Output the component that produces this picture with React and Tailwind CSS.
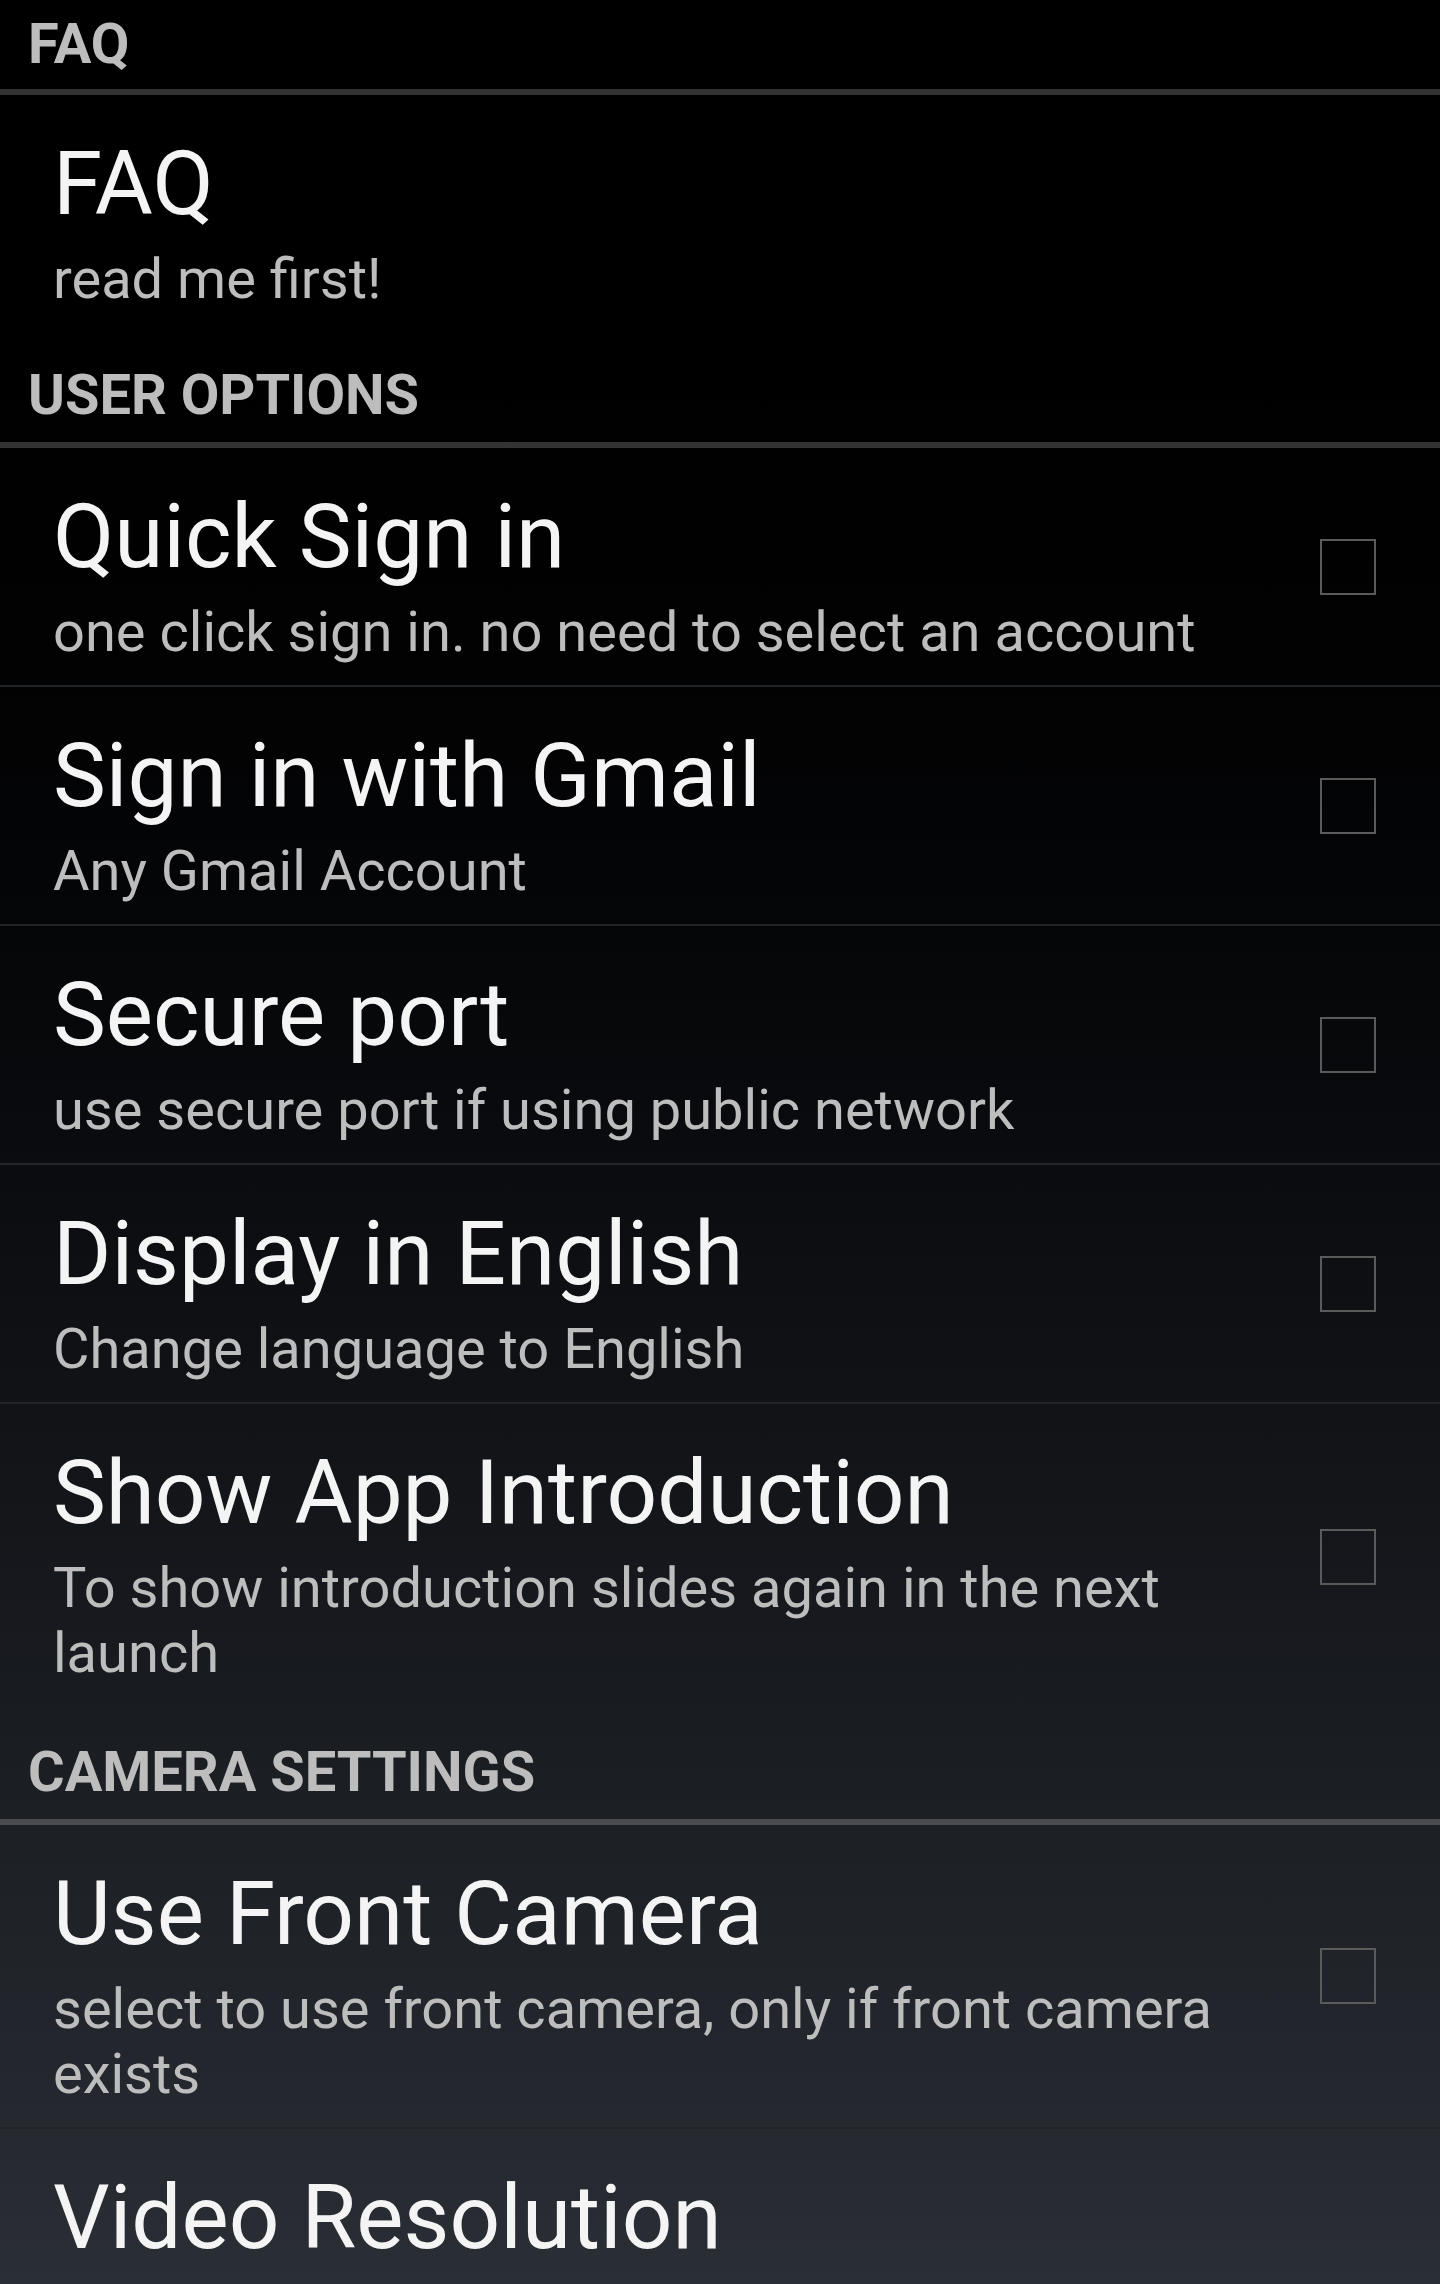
import React from 'react';

const groups = [
  {
    header: 'FAQ',
    first: true,
    items: [{ title: 'FAQ', summary: 'read me first!', noCheck: true }],
  },
  {
    header: 'USER OPTIONS',
    items: [
      { title: 'Quick Sign in', summary: 'one click sign in. no need to select an account' },
      { title: 'Sign in with Gmail', summary: 'Any Gmail Account' },
      { title: 'Secure port', summary: 'use secure port if using public network' },
      { title: 'Display in English', summary: 'Change language to English' },
      { title: 'Show App Introduction', summary: 'To show introduction slides again in the next launch' },
    ],
  },
  {
    header: 'CAMERA SETTINGS',
    items: [
      { title: 'Use Front Camera', summary: 'select to use front camera, only if front camera exists' },
      { title: 'Video Resolution', summary: '', noCheck: true },
    ],
  },
];

function Header({ text, first }) {
  return (
    <div>
      <div
        className={
          'px-[28px] text-[56px] leading-[63px] font-bold text-[#bdbdbd] ' +
          (first ? 'pt-[13px] pb-[13px]' : 'pt-[30px] pb-[15px]')
        }
      >
        {text}
      </div>
      <div className="h-[6px] bg-white/20" />
    </div>
  );
}

function Row({ item, last, extra }) {
  return (
    <div
      className={
        'flex items-center border-b-2 ' + (last ? 'border-transparent' : 'border-[#212326]')
      }
    >
      <div
        className={
          'flex-1 min-w-0 pl-[53px] pr-[50px] pt-[36px] ' + (extra ? 'pb-[23px]' : 'pb-[20px]')
        }
      >
        <div className="text-[89px] leading-[106px] text-[#f4f4f4]">{item.title}</div>
        {item.summary && (
          <div className="mt-[10px] text-[56px] leading-[65px] text-[#bdbdbd]">{item.summary}</div>
        )}
      </div>
      {!item.noCheck && (
        <div className="shrink-0 mr-[64px] w-[56px] h-[56px] border-2 border-[#5a5a5a]" />
      )}
    </div>
  );
}

export default function App() {
  return (
    <main
      className="w-[1440px] h-[2284px] overflow-hidden bg-gradient-to-b from-[#000000] to-[#2a2e35]"
      style={{ fontFamily: 'Roboto, "Noto Sans", sans-serif' }}
    >
      {groups.map((g) => (
        <div key={g.header}>
          <Header text={g.header} first={g.first} />
          {g.items.map((item, i) => {
            const last = i === g.items.length - 1;
            return <Row key={item.title} item={item} last={last} extra={last && !g.first} />;
          })}
        </div>
      ))}
    </main>
  );
}
